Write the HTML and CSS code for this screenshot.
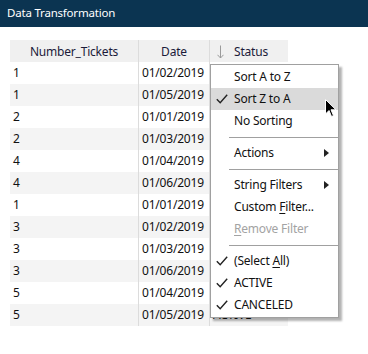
FILE: index.html
```html
<!DOCTYPE html>
<html lang="en">
<head>
    <meta charset="UTF-8">
    <title>Data Transformation</title>
    <link rel="stylesheet" href="styles.css">
</head>
<body>
    <div class="titlebar">Data Transformation</div>

    <div class="content">
        <div class="grid">
            <div class="head">Number_Tickets</div>
            <div class="head">Date</div>
            <div class="head head-status">
                <svg class="sort-arrow" width="7" height="14" viewBox="0 0 7 14">
                    <path d="M3.5 0.5 V13 M0.5 9.8 L3.5 13 L6.5 9.8" fill="none" stroke="#9a9a9a" stroke-width="1"/>
                </svg>Status
            </div>

            <div class="cell">1</div><div class="cell">01/02/2019</div><div class="cell"></div>
            <div class="cell alt">1</div><div class="cell alt">01/05/2019</div><div class="cell alt"></div>
            <div class="cell">2</div><div class="cell">01/01/2019</div><div class="cell"></div>
            <div class="cell alt">2</div><div class="cell alt">01/03/2019</div><div class="cell alt"></div>
            <div class="cell">4</div><div class="cell">01/04/2019</div><div class="cell"></div>
            <div class="cell alt">4</div><div class="cell alt">01/06/2019</div><div class="cell alt"></div>
            <div class="cell">1</div><div class="cell">01/01/2019</div><div class="cell"></div>
            <div class="cell alt">3</div><div class="cell alt">01/02/2019</div><div class="cell alt"></div>
            <div class="cell">3</div><div class="cell">01/03/2019</div><div class="cell"></div>
            <div class="cell alt">3</div><div class="cell alt">01/06/2019</div><div class="cell alt"></div>
            <div class="cell">5</div><div class="cell">01/04/2019</div><div class="cell"></div>
            <div class="cell alt">5</div><div class="cell alt">01/05/2019</div><div class="cell alt">ACTIVE</div>
        </div>

        <div class="menu">
            <div class="item">Sort A to Z</div>
            <div class="item hover">
                <svg class="check" width="12" height="10" viewBox="0 0 12 10"><path d="M0.8 5.2 L4.2 8.8 L11.2 0.8" fill="none" stroke="#222" stroke-width="1.4"/></svg>
                Sort Z to A
            </div>
            <div class="item">No Sorting</div>
            <div class="sep"></div>
            <div class="item submenu">Actions</div>
            <div class="sep"></div>
            <div class="item submenu">String Filters</div>
            <div class="item">Custom <u>F</u>ilter...</div>
            <div class="item disabled"><u>R</u>emove Filter</div>
            <div class="sep"></div>
            <div class="item">
                <svg class="check" width="12" height="10" viewBox="0 0 12 10"><path d="M0.8 5.2 L4.2 8.8 L11.2 0.8" fill="none" stroke="#222" stroke-width="1.4"/></svg>
                (Select <u>A</u>ll)
            </div>
            <div class="item">
                <svg class="check" width="12" height="10" viewBox="0 0 12 10"><path d="M0.8 5.2 L4.2 8.8 L11.2 0.8" fill="none" stroke="#222" stroke-width="1.4"/></svg>
                ACTIVE
            </div>
            <div class="item">
                <svg class="check" width="12" height="10" viewBox="0 0 12 10"><path d="M0.8 5.2 L4.2 8.8 L11.2 0.8" fill="none" stroke="#222" stroke-width="1.4"/></svg>
                CANCELED
            </div>

            <svg class="cursor" width="12" height="19" viewBox="0 0 12 19">
                <path d="M0.5 0.5 L0.5 15 L4 11.5 L6.5 17.5 L8.5 16.6 L6 10.8 L11 10.8 Z" fill="#000" stroke="#fff" stroke-width="1"/>
            </svg>
        </div>
    </div>
</body>
</html>
```

FILE: styles.css
```css
body {
    margin: 0;
    font-family: "Noto Sans", "Open Sans", sans-serif;
    font-size: 12px;
    letter-spacing: -0.2px;
    color: #111111;
    background-color: #ffffff;
}

.titlebar {
    background-color: #0b3451;
    color: #ffffff;
    height: 27px;
    line-height: 26px;
    padding-left: 7px;
    font-size: 11.5px;
}

.content {
    position: relative;
    padding: 13px 10px 0 10px;
}

.grid {
    display: grid;
    grid-template-columns: 129px 71px 78px;
    grid-auto-rows: 22px;
}

.head {
    background-color: #f0f0f0;
    height: 23px;
    line-height: 23px;
    text-align: center;
    color: #1b1b3a;
    border-right: 1px solid #dcdcdc;
}

.head-status {
    display: flex;
    align-items: center;
    padding-left: 7px;
    border-right: none;
}

.sort-arrow {
    margin-right: 10px;
}

.cell {
    line-height: 22px;
    padding-left: 3px;
    background-color: #ffffff;
    border-right: 1px solid #dcdcdc;
}

.cell:nth-child(3n) {
    border-right: none;
}

.cell.alt {
    background-color: #f4f4f4;
}

.menu {
    position: absolute;
    left: 210px;
    top: 37px;
    width: 127px;
    padding: 1px 0 1px 0;
    background-color: #ffffff;
    border: 1px solid #a0a0a0;
    box-shadow: 3px 3px 2px rgba(0, 0, 0, 0.3);
}

.item {
    position: relative;
    height: 22px;
    line-height: 22px;
    padding-left: 23px;
    color: #111111;
}

.item u {
    text-decoration-thickness: 1px;
    text-underline-offset: 2px;
}

.item.hover {
    background-color: #dadada;
}

.item.disabled {
    color: #a3a3a3;
}

.check {
    position: absolute;
    left: 5px;
    top: 6px;
}

.item.submenu::after {
    content: "";
    position: absolute;
    right: 9px;
    top: 7px;
    border-left: 5px solid #222222;
    border-top: 4px solid transparent;
    border-bottom: 4px solid transparent;
}

.sep {
    height: 10px;
    margin-left: 18px;
    display: flex;
    align-items: center;
}

.sep::before {
    content: "";
    flex: 1;
    border-top: 1px solid #a0a0a0;
}

.cursor {
    position: absolute;
    left: 114px;
    top: 34px;
}
```
